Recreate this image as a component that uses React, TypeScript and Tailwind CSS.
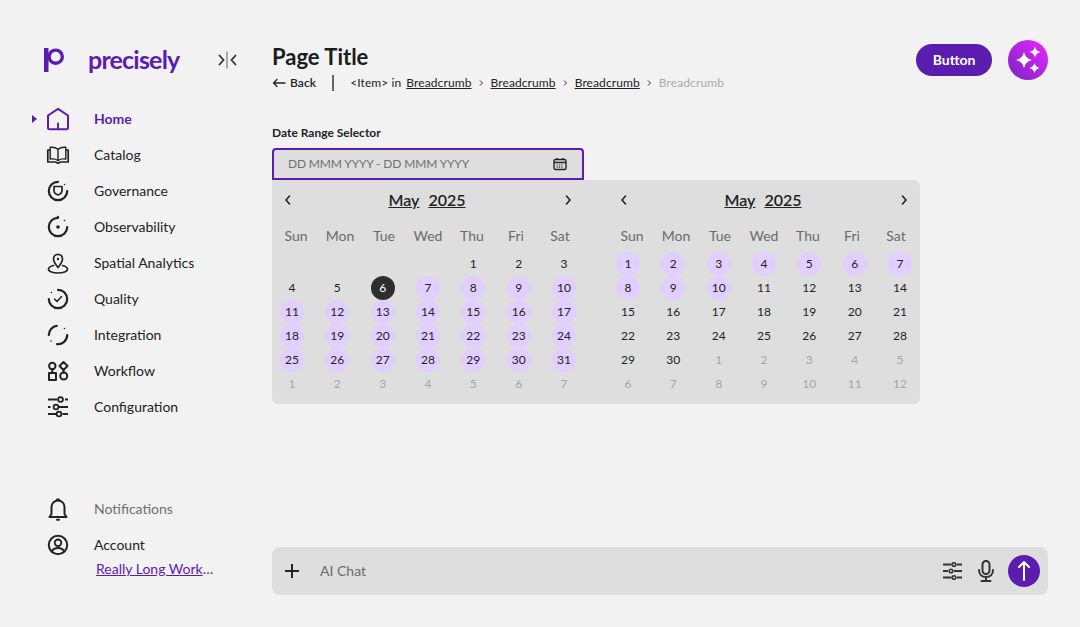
import React from "react";

const P = "#5a1db0";

const Svg = ({ children, color = "#222" }: { children: React.ReactNode; color?: string }) => (
  <svg width="24" height="24" viewBox="0 0 24 24" fill="none" stroke={color} strokeWidth="2" strokeLinecap="round" strokeLinejoin="round">
    {children}
  </svg>
);

const Dot = ({ x, y, r = 0.8 }: { x: number; y: number; r?: number }) => <circle cx={x} cy={y} r={r} fill="#222" stroke="none" />;

const icons: Record<string, React.ReactNode> = {
  Home: (
    <Svg color={P}>
      <path d="M12 1.8 L22 8.5 V21 a1.200 1.200 0 0 1 -1.200 1.200 H3.200 A1.200 1.200 0 0 1 2 21 V8.500 Z" />
      <path d="M12 16.500 V22" />
    </Svg>
  ),
  Catalog: (
    <Svg>
      <g strokeWidth="1.400">
        <path d="M12 6.200 C10 4.600 7 4 4.200 4.300 V16 C7 15.700 10 16 12 17.500 C14 16 17 15.700 19.800 16 V4.300 C17 4 14 4.600 12 6.200 Z" />
        <path d="M12 6.200 V17.500" />
        <path d="M4.200 7 H1.800 V19 H9.500 L12 20.300 L14.500 19 H22.200 V7 H19.800" strokeWidth="1.700" />
      </g>
    </Svg>
  ),
  Governance: (
    <Svg>
      <path d="M12 2.800 A9.200 9.200 0 1 0 21.200 12" strokeWidth="2.200" />
      <path d="M8 7.500 H16 V11.500 C16 13.800 14 15.300 12 16 C10 15.300 8 13.800 8 11.500 Z" strokeWidth="1.700" />
      <Dot x={18.500} y={5.500} />
    </Svg>
  ),
  Observability: (
    <Svg>
      <path d="M12 1.800 V2.800 A9.200 9.200 0 1 0 21.200 12" strokeWidth="2.200" />
      <Dot x={12} y={12} r={1.800} />
      <Dot x={18.500} y={5.500} />
    </Svg>
  ),
  "Spatial Analytics": (
    <Svg>
      <g strokeWidth="1.700">
        <path d="M12 16.500 C9.500 13.500 7.500 10.800 7.500 7.800 A4.500 4.500 0 0 1 16.500 7.800 C16.500 10.800 14.500 13.500 12 16.500 Z" />
        <path d="M7.500 14.500 C4.500 15.300 2.500 16.500 2.500 18.200 C2.500 20.500 7 22 12 22 C17 22 21.500 20.500 21.500 18.200 C21.500 16.500 19.500 15.300 16.500 14.500" />
      </g>
      <Dot x={12} y={8} r={1.200} />
    </Svg>
  ),
  Quality: (
    <Svg>
      <path d="M12 2.800 A9.200 9.200 0 1 1 2.800 12" strokeWidth="2.200" />
      <path d="M8.500 12 L11 14.500 L15.500 9.500" strokeWidth="1.500" />
      <Dot x={5.500} y={5.500} />
    </Svg>
  ),
  Integration: (
    <Svg>
      <path d="M2.800 12 A9.200 9.200 0 0 1 10.800 2.900" strokeWidth="2.200" />
      <path d="M21.200 12 A9.200 9.200 0 0 1 11 21.200" strokeWidth="2.200" />
      <Dot x={18.500} y={5.500} />
      <Dot x={5} y={18} />
    </Svg>
  ),
  Workflow: (
    <Svg>
      <circle cx="6.300" cy="7" r="3.200" />
      <path d="M17.500 3 L21.500 7 L17.500 11 L13.500 7 Z" />
      <rect x="3" y="14" width="7" height="7" />
      <circle cx="17.700" cy="17" r="3.500" />
      <path d="M6.300 10.200 V14 M17.500 11 V13.500" />
    </Svg>
  ),
  Configuration: (
    <Svg>
      <path d="M2 4.500 H11 M19 4.500 H22 M2 12 H4.500 M13 12 H22 M2 19 H10 M16.500 19 H22" strokeWidth="2" strokeLinecap="butt" />
      <circle cx="14.500" cy="4.500" r="2.400" strokeWidth="1.800" />
      <circle cx="10" cy="12" r="2.400" strokeWidth="1.800" />
      <circle cx="13" cy="19" r="2.400" strokeWidth="1.800" />
    </Svg>
  ),
  Notifications: (
    <Svg>
      <path d="M3.500 20 H20.500 L18.500 17 V10 A6.500 6.500 0 0 0 5.500 10 V17 Z" />
      <path d="M11 2.500 H13 M11 22.800 H13" />
    </Svg>
  ),
  Account: (
    <Svg>
      <circle cx="12" cy="12" r="9.200" />
      <circle cx="12" cy="9.800" r="3.300" strokeWidth="1.800" />
      <path d="M5.800 18.500 C7 15.800 9 15 12 15 C15 15 17 15.800 18.200 18.500" strokeWidth="1.800" />
    </Svg>
  ),
};

const NavRow = ({ label, active, muted }: { label: string; active?: boolean; muted?: boolean }) => (
  <div className="flex h-9 items-center pl-8">
    <div className="w-[14px]">
      {active && <div className="h-0 w-0 border-y-[4px] border-l-[5px] border-y-transparent border-l-[#5a1db0]" />}
    </div>
    <div className="h-6 w-6">{icons[label]}</div>
    <span className={"ml-6 text-sm " + (active ? "font-bold text-[#5a1db0]" : muted ? "text-[#6f6f6f]" : "text-[#222222]")}>{label}</span>
  </div>
);

const Chevron = ({ dir }: { dir: "l" | "r" }) => (
  <svg width="14" height="14" viewBox="0 0 14 14" fill="none" stroke="#222" strokeWidth="1.600" strokeLinecap="round" strokeLinejoin="round">
    <path d={dir === "l" ? "M8.500 3 L5 7 L8.500 11" : "M5.500 3 L9 7 L5.500 11"} />
  </svg>
);

const Sep = () => (
  <svg width="6" height="8" viewBox="0 0 6 8" fill="none" stroke="#333" strokeWidth="1">
    <path d="M2 1.500 L4.500 4 L2 6.500" />
  </svg>
);

type Day = { n: number; kind: "plain" | "sel" | "today" | "muted" | "empty" };

const plain = (n: number): Day => ({ n, kind: "plain" });
const sel = (n: number): Day => ({ n, kind: "sel" });
const mut = (n: number): Day => ({ n, kind: "muted" });
const empty: Day = { n: 0, kind: "empty" };

const left: Day[][] = [
  [empty, empty, empty, empty, plain(1), plain(2), plain(3)],
  [plain(4), plain(5), { n: 6, kind: "today" }, sel(7), sel(8), sel(9), sel(10)],
  [11, 12, 13, 14, 15, 16, 17].map(sel),
  [18, 19, 20, 21, 22, 23, 24].map(sel),
  [25, 26, 27, 28, 29, 30, 31].map(sel),
  [1, 2, 3, 4, 5, 6, 7].map(mut),
];

const right: Day[][] = [
  [1, 2, 3, 4, 5, 6, 7].map(sel),
  [sel(8), sel(9), sel(10), plain(11), plain(12), plain(13), plain(14)],
  [15, 16, 17, 18, 19, 20, 21].map(plain),
  [22, 23, 24, 25, 26, 27, 28].map(plain),
  [plain(29), plain(30), mut(1), mut(2), mut(3), mut(4), mut(5)],
  [6, 7, 8, 9, 10, 11, 12].map(mut),
];

const dayClass: Record<Day["kind"], string> = {
  plain: "text-[#222222]",
  sel: "bg-[#e0cfff] text-[#222222]",
  today: "bg-[#2e2e2e] text-white",
  muted: "text-[#a6a6a6]",
  empty: "",
};

const Month = ({ rows }: { rows: Day[][] }) => (
  <div className="w-[312px] shrink-0">
    <div className="flex h-10 items-center justify-between pl-[9px] pr-[9px]">
      <Chevron dir="l" />
      <div className="mr-[2px] flex gap-[9px] text-base font-semibold text-[#222222] underline">
        <span>May</span>
        <span>2025</span>
      </div>
      <Chevron dir="r" />
    </div>
    <div className="ml-[2px] mt-1 grid h-6 w-[308px] grid-cols-7 items-center text-center text-sm text-[#6b6b6b]">
      {["Sun", "Mon", "Tue", "Wed", "Thu", "Fri", "Sat"].map((d) => (
        <span key={d}>{d}</span>
      ))}
    </div>
    <div className="ml-2 mt-1 flex w-[296px] flex-col">
      {rows.map((r, i) => (
        <div key={i} className="flex justify-between">
          {r.map((d, j) => (
            <div key={j} className={"flex h-6 w-6 items-center justify-center rounded-full text-xs " + dayClass[d.kind]}>
              {d.kind !== "empty" && d.n}
            </div>
          ))}
        </div>
      ))}
    </div>
  </div>
);

export default function App() {
  return (
    <div className="flex h-[627px] w-[1080px] overflow-hidden bg-[#f2f2f2] font-['Lato','Noto_Sans',sans-serif] text-[#222222]">
      <aside className="flex w-[272px] shrink-0 flex-col">
        <div className="flex h-[101px] items-start pl-[44px] pt-[43px]">
          <svg className="shrink-0" width="22" height="30" viewBox="0 0 22 30" fill="none">
            <rect x="0" y="5" width="4.500" height="24" fill={P} />
            <circle cx="11.700" cy="13.700" r="6.600" stroke={P} strokeWidth="3.400" />
          </svg>
          <span className="ml-[22px] mt-[-1px] w-[92px] shrink-0 text-[25px] font-bold leading-[34px] tracking-[-0.8px] text-[#5a1db0]">precisely</span>
          <svg className="ml-[37px] mt-[8px] shrink-0" width="22" height="18" viewBox="0 0 22 18" fill="none" strokeLinecap="round">
            <path d="M2.500 4.500 L6.500 9 L2.500 13.500 M18.500 4.500 L14.500 9 L18.500 13.500" stroke="#333" strokeWidth="1.800" />
            <path d="M10 1 V17" stroke="#888" strokeWidth="1.400" />
          </svg>
        </div>
        <NavRow label="Home" active />
        <NavRow label="Catalog" />
        <NavRow label="Governance" />
        <NavRow label="Observability" />
        <NavRow label="Spatial Analytics" />
        <NavRow label="Quality" />
        <NavRow label="Integration" />
        <NavRow label="Workflow" />
        <NavRow label="Configuration" />
        <div className="mt-[66px]">
          <NavRow label="Notifications" muted />
          <NavRow label="Account" />
        </div>
        <a className="ml-24 mt-[-3px] block text-sm leading-[18px] text-[#5a1db0]">
          <span className="underline">Really Long Work</span>…
        </a>
      </aside>

      <main className="flex min-w-0 flex-1 flex-col pr-8">
        <div className="flex justify-between pt-[40px]">
          <div>
            <h1 className="text-[22px] font-bold leading-[34px] text-[#1c1c1c]">Page Title</h1>
            <div className="flex h-[18px] items-center text-xs tracking-[0.1px]">
              <svg width="14" height="10" viewBox="0 0 14 10" fill="none" stroke="#222" strokeWidth="1.300" strokeLinecap="round" strokeLinejoin="round">
                <path d="M13 5 H1.500 M5 1.500 L1.500 5 L5 8.500" />
              </svg>
              <span className="ml-[4px] font-semibold">Back</span>
              <div className="ml-[16px] h-4 w-[2px] bg-[#666666]" />
              <span className="ml-[16px]">&lt;Item&gt; in</span>
              <span className="ml-[5px] underline">Breadcrumb</span>
              <span className="mx-[6.500px]"><Sep /></span>
              <span className="underline">Breadcrumb</span>
              <span className="mx-[6.500px]"><Sep /></span>
              <span className="underline">Breadcrumb</span>
              <span className="mx-[6.500px]"><Sep /></span>
              <span className="text-[#ababab]">Breadcrumb</span>
            </div>
          </div>
          <div className="flex items-center gap-4 self-start">
            <button className="h-8 w-[76px] rounded-full bg-[#5a1db0] text-sm font-bold text-white">Button</button>
            <div className="flex h-10 w-10 items-center justify-center rounded-full bg-gradient-to-tr from-[#7a1fc4] to-[#ee1fff]">
              <svg width="32" height="32" viewBox="0 0 32 32" fill="white">
                <path d="M12 8 Q13.500 14.500 20 16 Q13.500 17.500 12 24 Q10.500 17.500 4 16 Q10.500 14.500 12 8 Z" />
                <path d="M23 2.500 Q24 7 28.500 8 Q24 9 23 13.500 Q22 9 17.500 8 Q22 7 23 2.500 Z" />
                <path d="M22.500 19 Q23.500 23 27.500 24 Q23.500 25 22.500 29 Q21.500 25 17.500 24 Q21.500 23 22.500 19 Z" />
              </svg>
            </div>
          </div>
        </div>

        <label className="mt-[33px] block text-xs font-bold leading-[16px] text-[#222222]">Date Range Selector</label>
        <div className="mt-[7px] flex h-8 w-[312px] items-center justify-between rounded-t border-2 border-[#5a1db0] bg-[#dedede] pl-[14px] pr-[15px] text-xs tracking-[-0.15px] text-[#707070]">
          <span>DD MMM YYYY - DD MMM YYYY</span>
          <svg width="14" height="14" viewBox="0 0 14 14" fill="none" stroke="#222" strokeWidth="1.400">
            <rect x="1" y="2.500" width="12" height="10" rx="1.500" />
            <path d="M1 5.500 H13 M4 1 V3 M10 1 V3" />
            <path d="M3.500 8 H10.500 M3.500 10.200 H10.500" strokeWidth="1.200" strokeDasharray="1.200 1.200" />
          </svg>
        </div>
        <div className="flex h-[224px] w-[648px] gap-6 rounded-md rounded-tl-none bg-[#dedede]">
          <Month rows={left} />
          <Month rows={right} />
        </div>

        <div className="mb-8 mt-auto flex h-12 items-center rounded-lg bg-[#dedede] pl-3 pr-2">
          <svg width="16" height="16" viewBox="0 0 16 16" stroke="#222" strokeWidth="2">
            <path d="M8 1 V15 M1 8 H15" />
          </svg>
          <span className="ml-5 flex-1 text-sm text-[#6b6b6b]">AI Chat</span>
          <svg width="19" height="18" viewBox="0 0 19 18" fill="none" stroke="#333" strokeWidth="2">
            <path d="M0 2.500 H8.500 M14 2.500 H19 M0 9 H5 M11 9 H19 M0 15.500 H8.500 M14 15.500 H19" />
            <circle cx="11" cy="2.500" r="1.800" strokeWidth="1.600" />
            <circle cx="8" cy="9" r="1.800" strokeWidth="1.600" />
            <circle cx="11" cy="15.500" r="1.800" strokeWidth="1.600" />
          </svg>
          <svg className="ml-[16px]" width="16" height="22" viewBox="0 0 16 22" fill="none" stroke="#333" strokeWidth="2" strokeLinecap="round">
            <rect x="4.500" y="1" width="7" height="13" rx="3.500" />
            <path d="M1 10 C1 14.500 4 17 8 17 C12 17 15 14.500 15 10 M8 17 V21 M3.500 21 H12.500" />
          </svg>
          <div className="ml-[14px] flex h-8 w-8 items-center justify-center rounded-full bg-[#5a1db0]">
            <svg width="14" height="22" viewBox="0 0 14 22" fill="none" stroke="white" strokeWidth="2" strokeLinecap="round" strokeLinejoin="round">
              <path d="M7 20 V2 M2 7 L7 2 L12 7" />
            </svg>
          </div>
        </div>
      </main>
    </div>
  );
}
